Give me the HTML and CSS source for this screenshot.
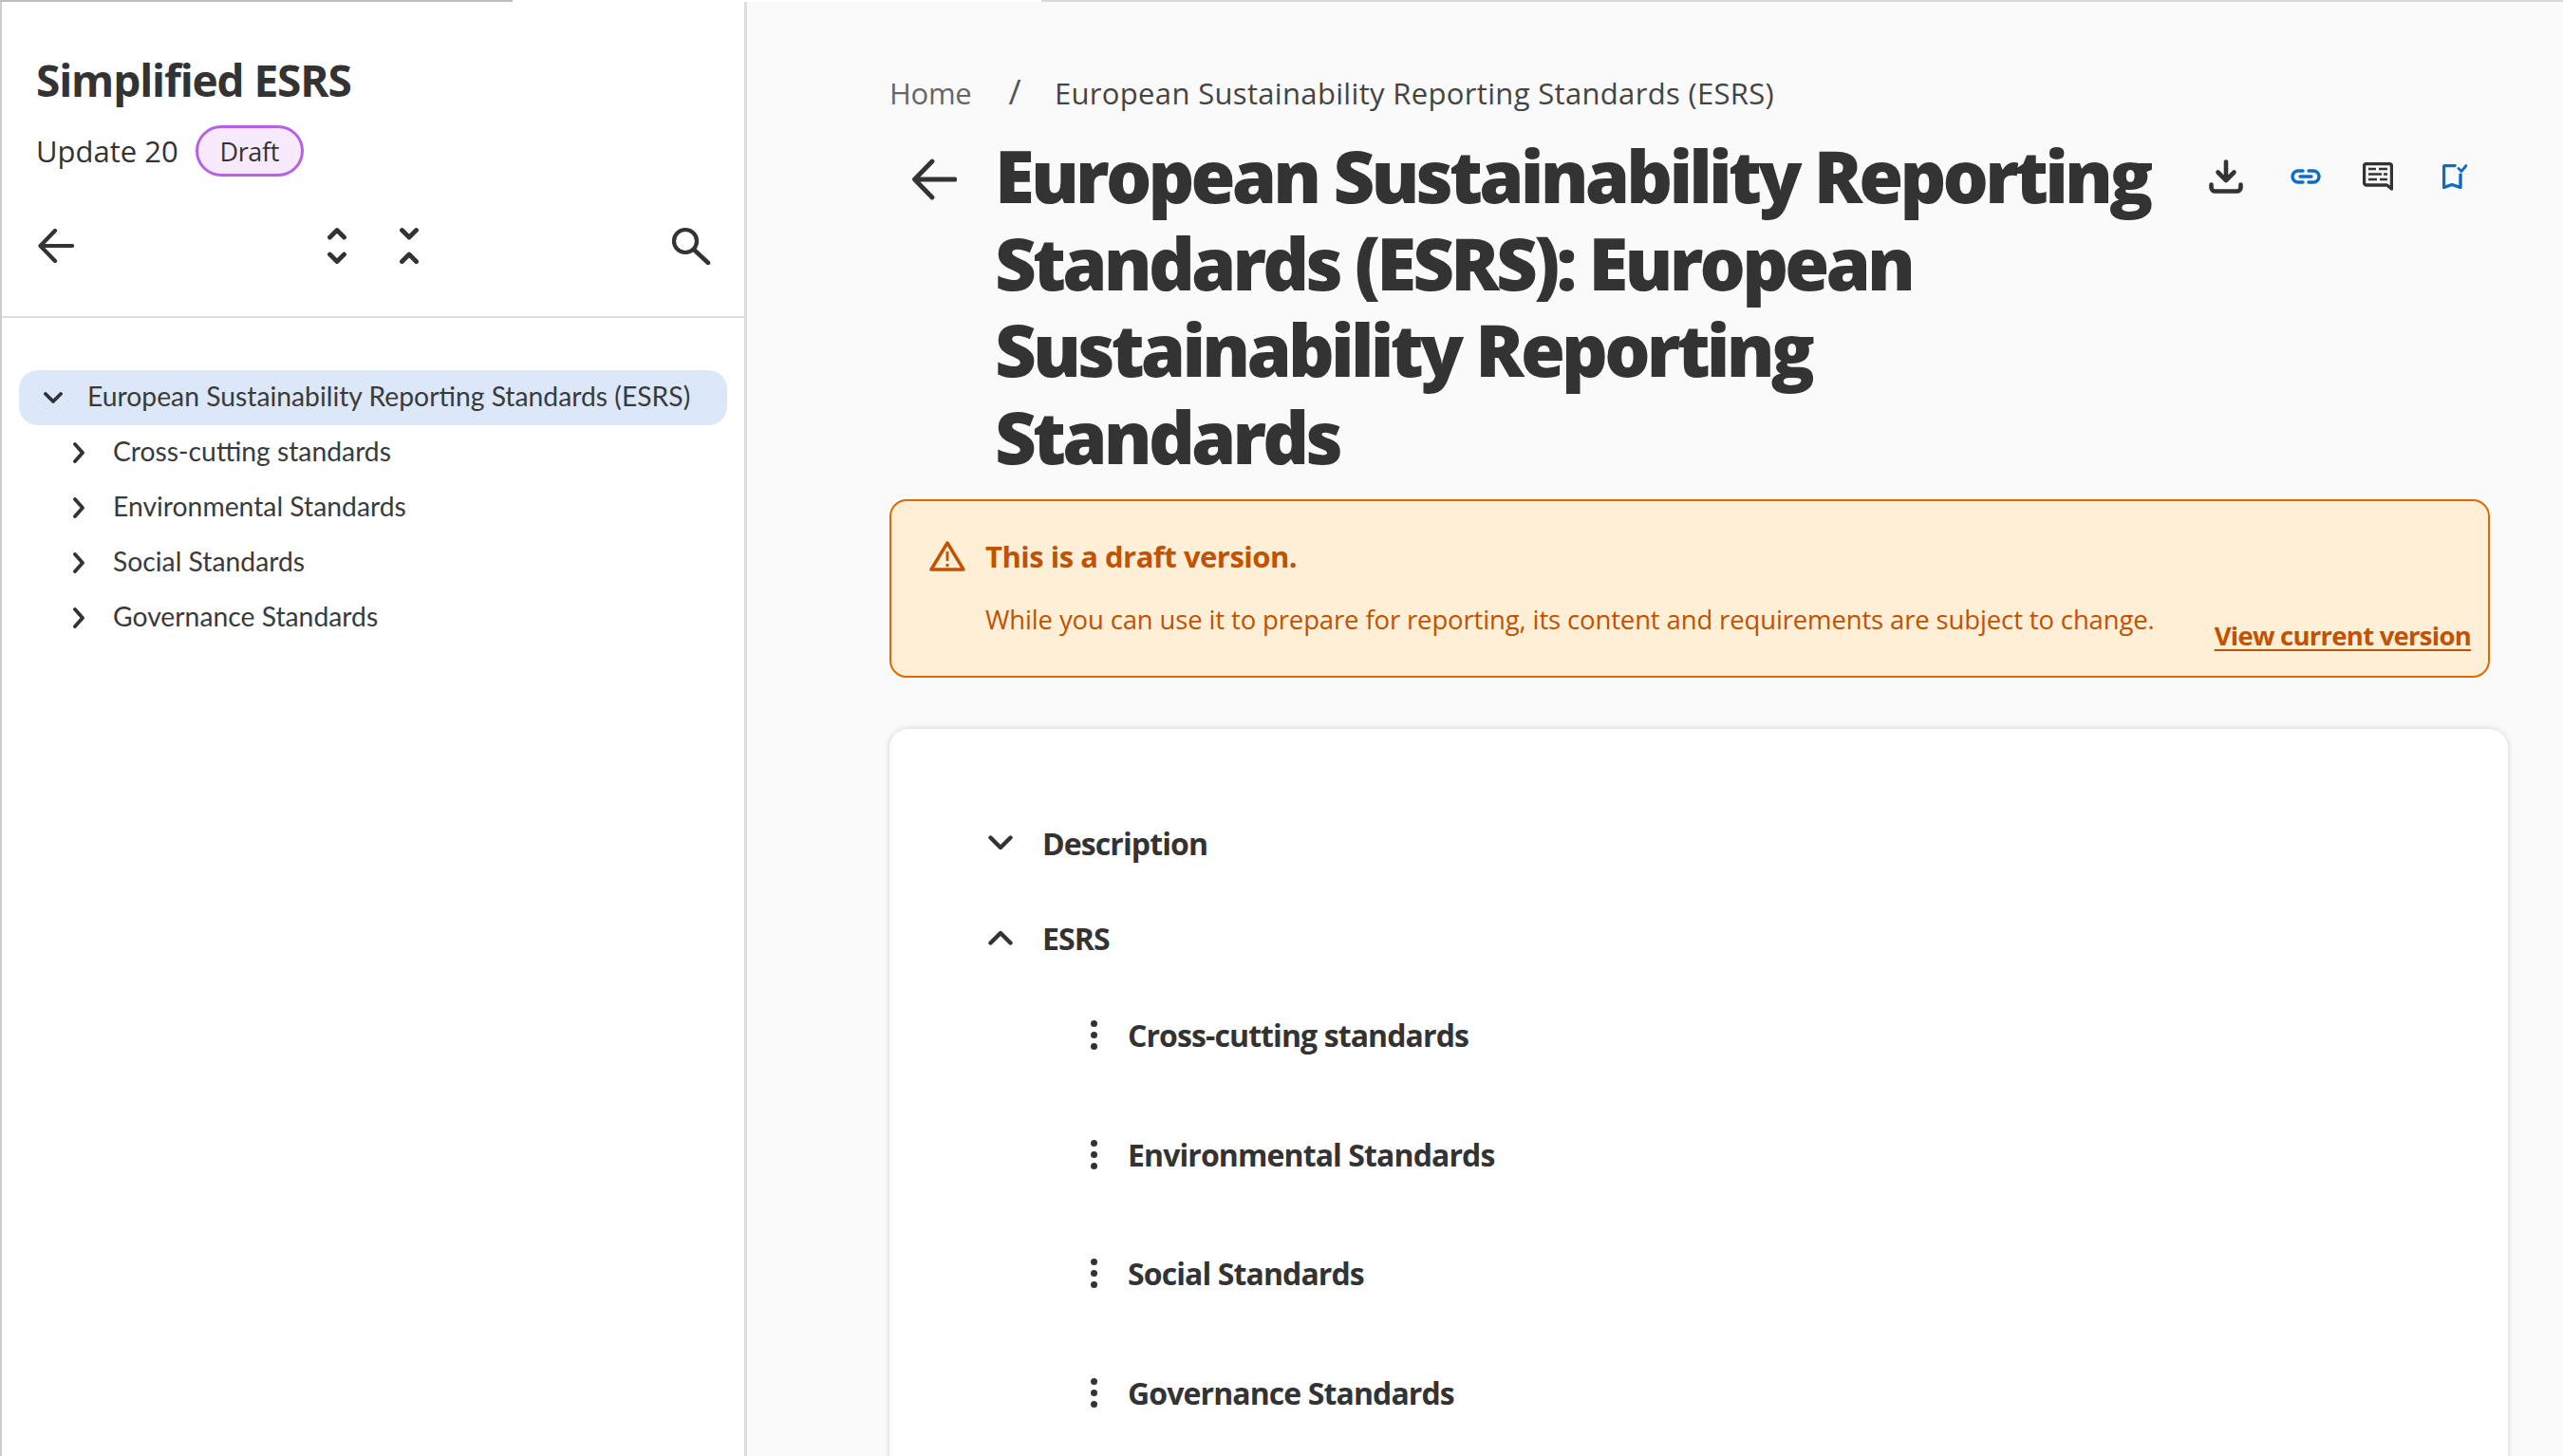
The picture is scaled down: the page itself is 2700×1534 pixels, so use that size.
FILE: index.html
```html
<!DOCTYPE html>
<html lang="en">
<head>
<meta charset="utf-8">
<title>European Sustainability Reporting Standards (ESRS)</title>
<link rel="stylesheet" href="styles.css">
</head>
<body>
<div class="topline"><span class="seg-dark"></span><span class="seg-white"></span><span class="seg-light"></span></div>
<div class="app">
  <aside class="sidebar">
    <header class="side-head">
      <h2 class="side-title">Simplified ESRS</h2>
      <div class="version"><span class="update">Update 20</span><span class="pill">Draft</span></div>
      <div class="tools">
        <svg class="ic-back" width="38" height="36" viewBox="0 0 38 36"><path d="M36 18H3M18 2 2.500 18 18 34" fill="none" stroke="#333" stroke-width="4.200" stroke-linecap="round" stroke-linejoin="round"/></svg>
        <svg class="ic-exp" width="20" height="40" viewBox="0 0 20 40"><path d="M2.500 11 10 3.500l7.500 7.500M2.500 29l7.500 7.500 7.500-7.500" fill="none" stroke="#333" stroke-width="4.800" stroke-linecap="round" stroke-linejoin="round"/></svg>
        <svg class="ic-col" width="20" height="40" viewBox="0 0 20 40"><path d="M2.500 3.500 10 11l7.500-7.500M2.500 36.500 10 29l7.500 7.500" fill="none" stroke="#333" stroke-width="4.800" stroke-linecap="round" stroke-linejoin="round"/></svg>
        <svg class="ic-search" width="42" height="40" viewBox="0 0 42 40"><circle cx="15" cy="15" r="12" fill="none" stroke="#333" stroke-width="4.200"/><path d="M24 24 39 38" stroke="#333" stroke-width="4.600" stroke-linecap="round"/></svg>
      </div>
    </header>
    <nav class="tree">
      <div class="tree-row root"><svg class="chev-d" width="20" height="12" viewBox="0 0 20 12"><path d="M2 2l8 8 8-8" fill="none" stroke="#333" stroke-width="3.800" stroke-linecap="round" stroke-linejoin="round"/></svg><span>European Sustainability Reporting Standards (ESRS)</span></div>
      <div class="tree-row"><svg class="chev-r" width="14" height="22" viewBox="0 0 14 22"><path d="M3 2l8 9-8 9" fill="none" stroke="#333" stroke-width="3.800" stroke-linecap="round" stroke-linejoin="round"/></svg><span>Cross-cutting standards</span></div>
      <div class="tree-row"><svg class="chev-r" width="14" height="22" viewBox="0 0 14 22"><path d="M3 2l8 9-8 9" fill="none" stroke="#333" stroke-width="3.800" stroke-linecap="round" stroke-linejoin="round"/></svg><span>Environmental Standards</span></div>
      <div class="tree-row"><svg class="chev-r" width="14" height="22" viewBox="0 0 14 22"><path d="M3 2l8 9-8 9" fill="none" stroke="#333" stroke-width="3.800" stroke-linecap="round" stroke-linejoin="round"/></svg><span>Social Standards</span></div>
      <div class="tree-row"><svg class="chev-r" width="14" height="22" viewBox="0 0 14 22"><path d="M3 2l8 9-8 9" fill="none" stroke="#333" stroke-width="3.800" stroke-linecap="round" stroke-linejoin="round"/></svg><span>Governance Standards</span></div>
    </nav>
  </aside>
  <main class="content">
    <div class="crumbs"><span class="crumb-home">Home</span><span class="crumb-sep">/</span><span class="crumb-cur">European Sustainability Reporting Standards (ESRS)</span></div>
    <div class="title-row">
      <svg class="title-back" width="48" height="48" viewBox="0 0 48 48"><path d="M46 24H3.500M22 5 3.500 24 22 43" fill="none" stroke="#333" stroke-width="4.800" stroke-linecap="round" stroke-linejoin="round"/></svg>
      <h1 class="page-title">European Sustainability Reporting Standards (ESRS): European Sustainability Reporting Standards</h1>
      <div class="actions">
        <svg class="act-dl" width="36" height="36" viewBox="0 0 36 36"><path d="M18 2.500v19M9.500 13.500l8.500 8.500 8.500-8.500M2.500 26.500v3a4 4 0 0 0 4 4h23a4 4 0 0 0 4-4v-3" fill="none" stroke="#333" stroke-width="4.600" stroke-linecap="round" stroke-linejoin="round"/></svg>
        <svg class="act-link" width="32" height="16" viewBox="0 0 32 16"><path d="M13 2H8a6 6 0 0 0 0 12h5M19 2h5a6 6 0 0 1 0 12h-5M10 8h12" fill="none" stroke="#0f6cc4" stroke-width="3.400" stroke-linecap="round"/></svg>
        <svg class="act-note" width="32" height="30" viewBox="0 0 32 30"><path d="M4 1.500h24A2.500 2.500 0 0 1 30.500 4v24L25.500 24H4A2.500 2.500 0 0 1 1.500 21.500V4A2.500 2.500 0 0 1 4 1.500Z" fill="none" stroke="#333" stroke-width="3.400" stroke-linejoin="round"/><path d="M6 7h8M17 7h9M6 12.500h14M22 12.500h4M6 18h9M18 18h8" stroke="#333" stroke-width="2.600"/></svg>
        <svg class="act-mark" width="26" height="26" viewBox="0 0 26 26"><path d="M13 1.500H3A1.500 1.500 0 0 0 1.500 3v21.500L10 21.500l9 3V11" fill="none" stroke="#0f6cc4" stroke-width="3.400" stroke-linecap="round" stroke-linejoin="round"/><path d="M17 4.500l3 3 5-6" fill="none" stroke="#0f6cc4" stroke-width="2.800" stroke-linecap="round" stroke-linejoin="round"/></svg>
      </div>
    </div>
    <section class="alert">
      <div class="alert-head">
        <svg class="alert-ic" width="38" height="32" viewBox="0 0 38 32"><path d="M19 2 2 30h34Z" fill="none" stroke="#c25100" stroke-width="3.400" stroke-linejoin="round"/><path d="M19 11v10" stroke="#c25100" stroke-width="2.800"/><circle cx="19" cy="25.500" r="1.700" fill="#c25100"/></svg>
        <strong>This is a draft version.</strong>
      </div>
      <div class="alert-body"><p>While you can use it to prepare for reporting, its content and requirements are subject to change.</p><a class="alert-link" href="#">View current version</a></div>
    </section>
    <section class="card">
      <div class="acc"><svg width="26" height="16" viewBox="0 0 26 16"><path d="M2.500 2.500l10.500 10.500 10.500-10.500" fill="none" stroke="#333" stroke-width="4.400" stroke-linecap="round" stroke-linejoin="round"/></svg><span>Description</span></div>
      <div class="acc acc-open"><svg width="26" height="16" viewBox="0 0 26 16"><path d="M2.500 13.500 13 3l10.500 10.500" fill="none" stroke="#333" stroke-width="4.400" stroke-linecap="round" stroke-linejoin="round"/></svg><span>ESRS</span></div>
      <ul class="sub">
        <li><span class="kebab"><i></i><i></i><i></i></span>Cross-cutting standards</li>
        <li><span class="kebab"><i></i><i></i><i></i></span>Environmental Standards</li>
        <li><span class="kebab"><i></i><i></i><i></i></span>Social Standards</li>
        <li><span class="kebab"><i></i><i></i><i></i></span>Governance Standards</li>
      </ul>
    </section>
  </main>
</div>
</body>
</html>
```
FILE: styles.css
```css
* { box-sizing: border-box; }
html, body { margin: 0; height: 100%; }
body { width: 2700px; height: 1534px; overflow: hidden; background: #fff; color: #333; font-family: "Open Sans", "Liberation Sans", sans-serif; }
.topline { display: flex; height: 2px; }
.seg-dark { width: 540px; background: #bdbdbd; }
.seg-white { width: 557px; background: #fff; }
.seg-light { flex: 1; background: #d9d9d9; }
.app { display: flex; height: 1532px; }

.sidebar { width: 787px; flex: none; background: #fff; border-left: 2px solid #ccc; border-right: 3px solid #ddd; font-family: "Lato", sans-serif; }
.side-head { height: 333px; border-bottom: 2px solid #ddd; padding: 55px 0 0 36px; }
.side-title { margin: 0; font: 700 46px/54px "Open Sans", sans-serif; letter-spacing: -1.130px; }
.version { display: flex; align-items: center; margin-top: 21px; }
.update { font: 400 31px/40px "Open Sans", sans-serif; }
.pill { display: flex; align-items: center; justify-content: center; width: 114px; height: 54px; margin-left: 18px; border: 3px solid #b75fe8; border-radius: 27px; background: #f6eafc; font: 400 27px/1 "Open Sans", sans-serif; letter-spacing: -.4px; }
.tools { display: flex; align-items: center; margin-top: 52px; height: 42px; padding-left: 2px; }
.ic-exp { margin-left: 267px; }
.ic-col { margin-left: 56px; }
.ic-search { margin-left: 266px; }

.tree { padding: 55px 18px 0 18px; }
.tree-row { display: flex; align-items: center; height: 58px; padding-left: 56px; font-size: 28.300px; color: #3a3a3a; }
.tree-row span { margin: 0 0 5px 29px; }
.root { padding-left: 26px; border-radius: 20px; background: #dce8f9; }
.root span { margin-left: 26px; }

.content { flex: 1; min-width: 0; background: #fafafa; padding: 0 58px 0 150px; overflow: hidden; }
.crumbs { display: flex; align-items: baseline; padding-top: 73px; font-size: 31px; line-height: 44px; letter-spacing: .33px; }
.crumb-home { color: #666; letter-spacing: -.3px; }
.crumb-sep { margin: 0 35px 0 39px; color: #555; font-size: 36px; }
.crumb-cur { color: #444; }
.title-row { display: flex; align-items: flex-start; margin-top: 5px; padding-left: 23px; }
.title-back { flex: none; margin-top: 40px; }
.page-title { flex: none; width: 1231px; margin: 14px 0 0 40px; font-size: 76px; font-weight: 800; line-height: 91.500px; letter-spacing: -3.800px; color: #333; }
.actions { display: flex; align-items: center; height: 40px; margin-top: 41px; }
.act-dl { margin-left: 48px; }
.act-link { margin-left: 50px; }
.act-note { margin-left: 44px; }
.act-mark { margin-left: 52px; }

.alert { width: 1686px; height: 188px; margin-top: 21px; padding: 40px 18px 0 40px; border: 2px solid #df6a00; border-radius: 18px; background: #ffefd6; color: #c25100; }
.alert-head { display: flex; align-items: center; height: 36px; }
.alert-head strong { margin-left: 21px; font-size: 31px; font-weight: 700; letter-spacing: -.5px; }
.alert-body { display: flex; align-items: flex-start; justify-content: space-between; padding-left: 59px; margin-top: 29px; }
.alert-body p { margin: 0; font-size: 27.500px; line-height: 40px; letter-spacing: -.14px; }
.alert-link { margin-top: 17px; font-size: 27.500px; font-weight: 700; line-height: 40px; color: #c25100; letter-spacing: -.75px; text-underline-offset: 4px; }

.card { width: 1705px; height: 900px; margin-top: 54px; padding: 90px 0 0 104px; border-radius: 20px 20px 0 0; background: #fff; box-shadow: 0 0 6px rgba(60, 60, 90, .22); }
.acc { display: flex; align-items: center; height: 60px; font-size: 32px; font-weight: 700; letter-spacing: -.9px; }
.acc span { margin-left: 31px; }
.acc-open { margin-top: 40px; }
.sub { list-style: none; margin: 0; padding: 0 0 0 105px; }
.sub li { display: flex; align-items: center; height: 125.600px; font-size: 32px; font-weight: 700; letter-spacing: -.9px; }
.sub li:first-child { margin-top: 10px; }
.kebab { display: flex; flex-direction: column; gap: 5px; width: 42px; padding-left: 3px; }
.kebab i { display: block; width: 7px; height: 7px; border-radius: 50%; background: #333; }
```
